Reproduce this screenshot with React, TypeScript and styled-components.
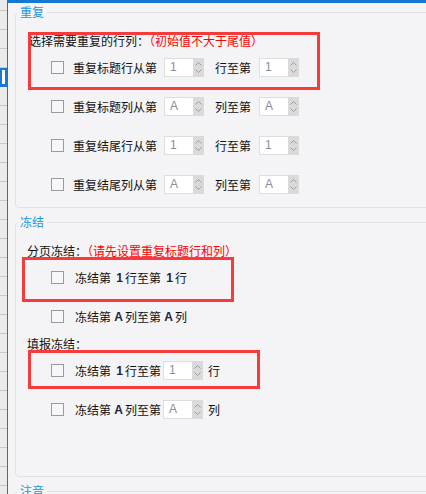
import React from 'react';
import styled, { createGlobalStyle } from 'styled-components';

const GlobalStyle = createGlobalStyle`
  html, body {
    margin: 0;
    padding: 0;
    background: #f4f4f6;
  }
  body {
    font-family: "Noto Sans CJK SC", "Noto Sans", sans-serif;
    font-size: 12px;
    color: #111;
  }
`;

const Screen = styled.div`
  display: flex;
  width: 426px;
  height: 494px;
  overflow: hidden;
`;

// the bit of spreadsheet peeking out on the left
const SheetEdge = styled.div`
  width: 7px;
  flex: none;
  display: flex;
  flex-direction: column;
  background: #ebebeb;
`;

const SheetCell = styled.div<{ $first?: boolean; $selected?: boolean }>`
  flex: none;
  height: ${props => (props.$first ? 10 : 18)}px;
  border-bottom: 1px solid ${props => (props.$selected ? '#1a78d4' : '#c8c8c8')};
  background: ${props => (props.$selected ? '#fff' : 'transparent')};
  box-shadow: ${props => (props.$selected ? 'inset 0 0 0 2px #1a78d4' : 'none')};
`;

const Dialog = styled.div`
  flex: 1;
  min-width: 0;
  border-top: 3px solid #1478d2;
  border-left: 1px solid #1478d2;
  background: #f4f4f6;
  padding: 2px 0 0 7px;
  overflow: hidden;
`;

const Section = styled.fieldset<{ $bottom: number }>`
  margin: 0 0 7px 0;
  width: 430px;
  min-width: 0;
  box-sizing: border-box;
  border: 1px solid #e1e1e5;
  border-radius: 4px;
  padding: 14px 0 ${props => props.$bottom}px 0;
`;

const Legend = styled.legend`
  margin-left: 1px;
  padding: 0 3px;
  font-size: 12px;
  line-height: 14px;
  color: #1b98dc;
`;

const Marked = styled.div`
  position: relative;
`;

const Highlight = styled.div<{ $left: number; $top: number; $width: number; $height: number }>`
  position: absolute;
  left: ${props => props.$left}px;
  top: ${props => props.$top}px;
  width: ${props => props.$width}px;
  height: ${props => props.$height}px;
  box-sizing: border-box;
  border: 3px solid #f73b3b;
  pointer-events: none;
`;

const Hint = styled.div<{ $indent: number }>`
  height: 15px;
  line-height: 15px;
  padding-left: ${props => props.$indent}px;
  white-space: nowrap;
`;

const Warn = styled.span`
  color: #ff0000;
`;

const Row = styled.div`
  height: 39px;
  display: flex;
  align-items: center;
  padding-left: 35px;
  white-space: nowrap;
`;

const Check = styled.span<{ $gap: number }>`
  flex: none;
  width: 13px;
  height: 13px;
  box-sizing: border-box;
  border: 1px solid #9b9b9b;
  background: #f7f7f9;
  margin-right: ${props => props.$gap}px;
`;

const Text = styled.span<{ $ml?: number; $mr?: number }>`
  flex: none;
  line-height: 16px;
  margin-left: ${props => props.$ml || 0}px;
  margin-right: ${props => props.$mr || 0}px;
`;

const Num = styled.span`
  flex: none;
  width: 14px;
  box-sizing: border-box;
  padding-right: 2px;
  text-align: right;
  font: bold 12px/16px "Liberation Sans", sans-serif;
  color: #1c2340;
`;

const Spin = styled.div`
  flex: none;
  display: flex;
  height: 19px;
`;

const SpinField = styled.div`
  width: 29px;
  box-sizing: border-box;
  border: 1px solid #dedede;
  border-right: none;
  background: #fff;
  padding-left: 5px;
  font: 12px/17px "Liberation Sans", sans-serif;
  color: #8a8c99;
`;

const SpinButtons = styled.div`
  width: 11px;
  background: #dadada;
  display: flex;
  flex-direction: column;
  align-items: center;
  justify-content: space-around;
  padding: 2px 0;
  box-sizing: border-box;
`;

const Chevron = ({ down }: { down?: boolean }) => (
  <svg width="7" height="4" viewBox="0 0 7 4">
    <polyline
      points={down ? '0.5,0.5 3.5,3.5 6.5,0.5' : '0.5,3.5 3.5,0.5 6.5,3.5'}
      fill="none"
      stroke="#9c9c9c"
      strokeWidth="1"
    />
  </svg>
);

const SpinBox = ({ value }: { value: string }) => (
  <Spin>
    <SpinField>{value}</SpinField>
    <SpinButtons>
      <Chevron />
      <Chevron down />
    </SpinButtons>
  </Spin>
);

const repeatRows = [
  { from: '重复标题行从第', to: '行至第', v: '1' },
  { from: '重复标题列从第', to: '列至第', v: 'A' },
  { from: '重复结尾行从第', to: '行至第', v: '1' },
  { from: '重复结尾列从第', to: '列至第', v: 'A' },
];

const App: React.FC = () => {
  const cells = Array.from({ length: 27 }, (_, i) => i);

  return (
    <>
      <GlobalStyle />
      <Screen>
        <SheetEdge>
          {cells.map(i => (
            <SheetCell key={i} $first={i === 0} $selected={i === 4} />
          ))}
        </SheetEdge>

        <Dialog>
          <Section $bottom={3}>
            <Legend>重复</Legend>
            <Marked>
              <Hint $indent={13}>
                选择需要重复的行列：<Warn>（初始值不大于尾值）</Warn>
              </Hint>
              <Highlight $left={12} $top={-1} $width={292} $height={58} />
            </Marked>
            {repeatRows.map((r, i) => (
              <Row key={i}>
                <Check $gap={9} />
                <Text $mr={7}>{r.from}</Text>
                <SpinBox value={r.v} />
                <Text $ml={11} $mr={8}>{r.to}</Text>
                <SpinBox value={r.v} />
              </Row>
            ))}
          </Section>

          <Section $bottom={47}>
            <Legend>冻结</Legend>
            <Marked>
              <Hint $indent={11}>
                分页冻结：<Warn>（请先设置重复标题行和列）</Warn>
              </Hint>
              <Row>
                <Check $gap={11} />
                <Text>冻结第</Text>
                <Num>1</Num>
                <Text>行至第</Text>
                <Num>1</Num>
                <Text>行</Text>
              </Row>
              <Highlight $left={6} $top={14} $width={212} $height={45} />
            </Marked>
            <Row>
              <Check $gap={11} />
              <Text>冻结第</Text>
              <Num>A</Num>
              <Text>列至第</Text>
              <Num>A</Num>
              <Text>列</Text>
            </Row>

            <Marked>
              <Hint $indent={11}>填报冻结：</Hint>
              <Row>
                <Check $gap={11} />
                <Text>冻结第</Text>
                <Num>1</Num>
                <Text $mr={2}>行至第</Text>
                <SpinBox value="1" />
                <Text $ml={5}>行</Text>
              </Row>
              <Highlight $left={12} $top={14} $width={232} $height={39} />
            </Marked>
            <Row>
              <Check $gap={11} />
              <Text>冻结第</Text>
              <Num>A</Num>
              <Text $mr={2}>列至第</Text>
              <SpinBox value="A" />
              <Text $ml={5}>列</Text>
            </Row>
          </Section>

          <Section $bottom={40}>
            <Legend>注音</Legend>
            <Hint $indent={11}>&nbsp;</Hint>
          </Section>
        </Dialog>
      </Screen>
    </>
  );
};

export default App;
